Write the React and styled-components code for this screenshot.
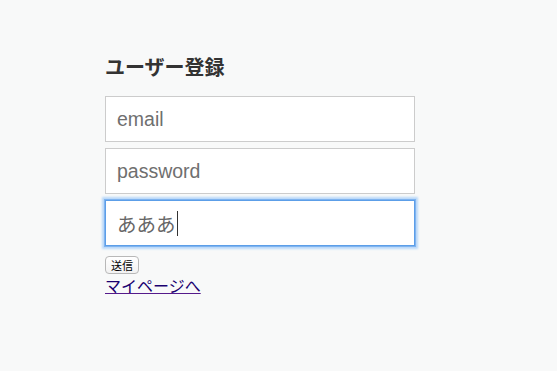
import React from "react";
import styled, { createGlobalStyle } from "styled-components";

const Global = createGlobalStyle`
  html, body { margin: 0; padding: 0; background: #f8f9f9; }
  body { font-family: "Helvetica Neue", "Liberation Sans", Arial, "Noto Sans CJK JP", sans-serif; }
`;

const Page = styled.div`
  min-height: 371px;
  padding: 55px 0 0 105px;
  box-sizing: border-box;
`;

const Form = styled.form`
  display: flex;
  flex-direction: column;
  width: 310px;
`;

const Title = styled.h2`
  margin: 0 0 17px;
  font-size: 20px;
  line-height: 24px;
  font-weight: 700;
  color: #333;
  font-family: "Noto Sans CJK JP", sans-serif;
`;

const Field = styled.div`
  position: relative;
  width: 310px;
  height: 46px;
  margin-bottom: 6px;
`;

const Input = styled.input`
  box-sizing: border-box;
  width: 100%;
  height: 100%;
  margin: 0;
  padding: 0 11px;
  border: 1px solid #cccccc;
  border-radius: 0;
  background: #fff;
  font-size: 19.5px;
  color: #666;
  font-family: "Liberation Sans", "Noto Sans CJK JP", sans-serif;
  outline: none;
  caret-color: transparent;
  &::placeholder { color: #6f6f6f; }
  ${(p) =>
    p.$focused &&
    `
    border-color: #5c9ee8;
    box-shadow: 0 0 0 1px #7fb4f0, 0 0 2px 3px #b9d8f9;
  `}
`;

const Caret = styled.span`
  position: absolute;
  left: 72px;
  top: 11px;
  width: 1px;
  height: 25px;
  background: #333;
  pointer-events: none;
`;

const Button = styled.button`
  align-self: flex-start;
  margin-top: 4px;
  height: 18px;
  padding: 0 5px;
  font-size: 11px;
  line-height: 14px;
  font-family: "Noto Sans CJK JP", sans-serif;
  color: #000;
  background: linear-gradient(#ffffff, #f2f2f2);
  border: 1px solid #b8b8b8;
  border-radius: 4px;
`;

const Link = styled.a`
  margin-top: 1px;
  align-self: flex-start;
  font-size: 16px;
  line-height: 21px;
  color: #1a0070;
  text-decoration: underline;
  text-decoration-color: #551a8b;
  font-family: "Noto Sans CJK JP", sans-serif;
`;

export default function App() {
  return (
    <>
      <Global />
      <Page>
        <Form onSubmit={(e) => e.preventDefault()}>
          <Title>ユーザー登録</Title>
          <Field>
            <Input type="text" placeholder="email" />
          </Field>
          <Field>
            <Input type="password" placeholder="password" />
          </Field>
          <Field>
            <Input $focused type="text" defaultValue="あああ" />
            <Caret />
          </Field>
          <Button type="submit">送信</Button>
          <Link href="#">マイページへ</Link>
        </Form>
      </Page>
    </>
  );
}
